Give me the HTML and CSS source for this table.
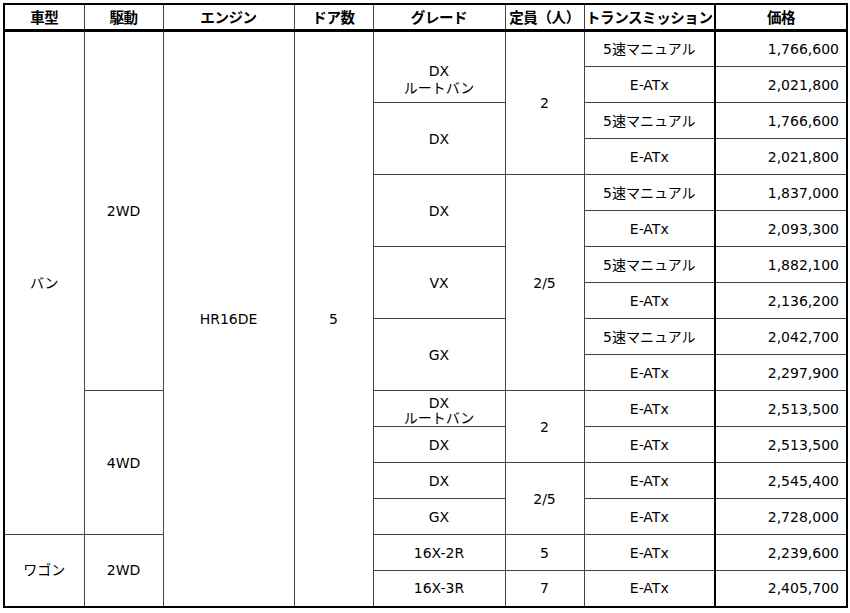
FILE: index.html
```html
<!DOCTYPE html>
<html lang="ja">
<head>
<meta charset="utf-8">
<link rel="stylesheet" href="styles.css">
</head>
<body>
<table class="price-table">
  <colgroup>
    <col class="c1"><col class="c2"><col class="c3"><col class="c4">
    <col class="c5"><col class="c6"><col class="c7"><col class="c8">
  </colgroup>
  <thead>
    <tr class="head">
      <th>車型</th><th>駆動</th><th>エンジン</th><th>ドア数</th><th>グレード</th><th>定員（人）</th><th>トランスミッション</th><th class="price">価格</th>
    </tr>
  </thead>
  <tbody>
    <tr>
      <td rowspan="14">バン</td>
      <td rowspan="10">2WD</td>
      <td rowspan="16">HR16DE</td>
      <td rowspan="16">5</td>
      <td rowspan="2" class="two low">DX<br>ルートバン</td>
      <td rowspan="4">2</td>
      <td>5速マニュアル</td><td class="price num">1,766,600</td>
    </tr>
    <tr><td>E-ATx</td><td class="price num">2,021,800</td></tr>
    <tr><td rowspan="2">DX</td><td>5速マニュアル</td><td class="price num">1,766,600</td></tr>
    <tr><td>E-ATx</td><td class="price num">2,021,800</td></tr>
    <tr><td rowspan="2">DX</td><td rowspan="6">2/5</td><td>5速マニュアル</td><td class="price num">1,837,000</td></tr>
    <tr><td>E-ATx</td><td class="price num">2,093,300</td></tr>
    <tr><td rowspan="2">VX</td><td>5速マニュアル</td><td class="price num">1,882,100</td></tr>
    <tr><td>E-ATx</td><td class="price num">2,136,200</td></tr>
    <tr><td rowspan="2">GX</td><td>5速マニュアル</td><td class="price num">2,042,700</td></tr>
    <tr><td>E-ATx</td><td class="price num">2,297,900</td></tr>
    <tr><td rowspan="4">4WD</td><td class="two shift">DX<br>ルートバン</td><td rowspan="2">2</td><td>E-ATx</td><td class="price num">2,513,500</td></tr>
    <tr><td>DX</td><td>E-ATx</td><td class="price num">2,513,500</td></tr>
    <tr><td>DX</td><td rowspan="2">2/5</td><td>E-ATx</td><td class="price num">2,545,400</td></tr>
    <tr><td>GX</td><td>E-ATx</td><td class="price num">2,728,000</td></tr>
    <tr><td rowspan="2">ワゴン</td><td rowspan="2">2WD</td><td>16X-2R</td><td>5</td><td>E-ATx</td><td class="price num">2,239,600</td></tr>
    <tr><td>16X-3R</td><td>7</td><td>E-ATx</td><td class="price num">2,405,700</td></tr>
  </tbody>
</table>
</body>
</html>
```

FILE: styles.css
```css
html, body {
  margin: 0;
  padding: 0;
  background: #fff;
}
body {
  padding: 3px 0 0 3px;
  font-family: "DejaVu Sans", "Noto Sans CJK JP", sans-serif;
  font-size: 14px;
  color: #111;
}
.price-table {
  border-collapse: collapse;
  table-layout: fixed;
  width: 843px;
  border: 2px solid #000;
}
.c1 { width: 80px; }
.c2 { width: 79px; }
.c3 { width: 131px; }
.c4 { width: 79px; }
.c5 { width: 132px; }
.c6 { width: 79px; }
.c7 { width: 131px; }
.c8 { width: 132px; }

.price-table th,
.price-table td {
  border: 1px solid #444;
  padding: 0;
  text-align: center;
  vertical-align: middle;
  white-space: nowrap;
  line-height: 16px;
}
.head th {
  height: 24px;
  font-family: "Noto Sans CJK JP", "DejaVu Sans", sans-serif;
  font-weight: bold;
  font-size: 14.5px;
  letter-spacing: -0.4px;
  color: #000;
  border-bottom: 3px solid #000;
  border-top: 2px solid #000;
}
.price-table tbody tr {
  height: 36px;
}
.price-table tbody td {
  font-family: "DejaVu Sans", "Noto Sans CJK JP", sans-serif;
  color: #000;
}
.price-table th.price,
.price-table td.price {
  border-left: 2px solid #000;
  border-right: 2px solid #000;
}
.price-table td.num {
  text-align: right;
  padding-right: 7px;
}
.price-table td.two {
  line-height: 17px;
}
.price-table td.low {
  padding-top: 26px;
}
.price-table td.shift {
  padding-top: 4px;
  line-height: 15px;
}
```
